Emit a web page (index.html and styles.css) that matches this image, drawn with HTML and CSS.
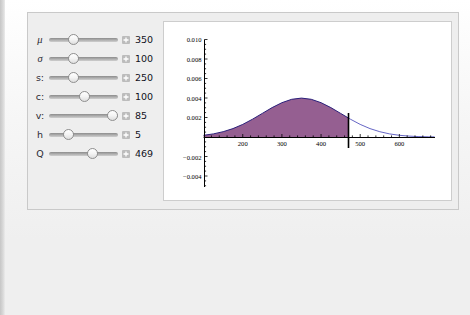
FILE: index.html
```html
<!DOCTYPE html>
<html>
<head>
<meta charset="utf-8">
<link rel="stylesheet" href="styles.css">
</head>
<body>
<div class="window">
  <div class="edge"></div>
  <div class="page">
    <div class="panel">
      <div class="controls">
        <div class="row"><span class="lbl sym">μ</span><div class="slider"><span class="knob" style="left:19px"></span></div><svg class="plus" viewBox="0 0 8 8"><rect width="8" height="8" rx="1" fill="#bcbcbc"/><path d="M4 1.5v5M1.5 4h5" stroke="#fff" stroke-width="1.3"/></svg><span class="val">350</span></div>
        <div class="row"><span class="lbl sym">σ</span><div class="slider"><span class="knob" style="left:19px"></span></div><svg class="plus" viewBox="0 0 8 8"><rect width="8" height="8" rx="1" fill="#bcbcbc"/><path d="M4 1.5v5M1.5 4h5" stroke="#fff" stroke-width="1.3"/></svg><span class="val">100</span></div>
        <div class="row"><span class="lbl">s:</span><div class="slider"><span class="knob" style="left:19px"></span></div><svg class="plus" viewBox="0 0 8 8"><rect width="8" height="8" rx="1" fill="#bcbcbc"/><path d="M4 1.5v5M1.5 4h5" stroke="#fff" stroke-width="1.3"/></svg><span class="val">250</span></div>
        <div class="row"><span class="lbl">c:</span><div class="slider"><span class="knob" style="left:30px"></span></div><svg class="plus" viewBox="0 0 8 8"><rect width="8" height="8" rx="1" fill="#bcbcbc"/><path d="M4 1.5v5M1.5 4h5" stroke="#fff" stroke-width="1.3"/></svg><span class="val">100</span></div>
        <div class="row"><span class="lbl">v:</span><div class="slider"><span class="knob" style="left:58px"></span></div><svg class="plus" viewBox="0 0 8 8"><rect width="8" height="8" rx="1" fill="#bcbcbc"/><path d="M4 1.5v5M1.5 4h5" stroke="#fff" stroke-width="1.3"/></svg><span class="val">85</span></div>
        <div class="row"><span class="lbl">h</span><div class="slider"><span class="knob" style="left:14px"></span></div><svg class="plus" viewBox="0 0 8 8"><rect width="8" height="8" rx="1" fill="#bcbcbc"/><path d="M4 1.5v5M1.5 4h5" stroke="#fff" stroke-width="1.3"/></svg><span class="val">5</span></div>
        <div class="row"><span class="lbl">Q</span><div class="slider"><span class="knob" style="left:38px"></span></div><svg class="plus" viewBox="0 0 8 8"><rect width="8" height="8" rx="1" fill="#bcbcbc"/><path d="M4 1.5v5M1.5 4h5" stroke="#fff" stroke-width="1.3"/></svg><span class="val">469</span></div>
      </div>
      <div class="plot">
        <svg class="chart" width="287" height="178" viewBox="164 22 287 178">
          <polygon fill="#955f91" points="203.6,137 203.6,135.3 213.39,133.9 223.18,131.7 232.96,128.6 242.75,124.4 252.54,119.2 262.33,113.4 272.11,107.6 281.9,102.7 291.69,99.3 301.48,98.1 311.26,99.3 321.05,102.7 330.84,107.6 340.63,113.4 348.07,117.8 348.07,137"/>
          <polyline fill="none" stroke="#2a1f7a" stroke-width="1" points="203.6,135.3 213.39,133.9 223.18,131.7 232.96,128.6 242.75,124.4 252.54,119.2 262.33,113.4 272.11,107.6 281.9,102.7 291.69,99.3 301.48,98.1 311.26,99.3 321.05,102.7 330.84,107.6 340.63,113.4 348.07,117.8"/>
          <polyline fill="none" stroke="#3d3db5" stroke-width="0.8" points="348.07,117.8 350.41,119.2 360.2,124.4 369.99,128.6 379.78,131.7 389.56,133.9 399.35,135.3 409.14,136.1 418.93,136.6 428.71,136.8 434.6,136.9"/>
          <path stroke="#000" stroke-width="1" fill="none" d="M203.6 137.5H435M204.5 39.5V187"/>
          <path stroke="#000" stroke-width="0.8" fill="none" d="M204.5 39.5h3M204.5 59h3M204.5 78.5h3M204.5 98h3M204.5 117.5h3M204.5 156.5h3M204.5 176h3
            M204.5 44.4h1.6M204.5 49.25h1.6M204.5 54.1h1.6M204.5 63.9h1.6M204.5 68.75h1.6M204.5 73.6h1.6M204.5 83.4h1.6M204.5 88.25h1.6M204.5 93.1h1.6M204.5 102.9h1.6M204.5 107.75h1.6M204.5 112.6h1.6M204.5 122.4h1.6M204.5 127.25h1.6M204.5 132.1h1.6M204.5 141.9h1.6M204.5 146.75h1.6M204.5 151.6h1.6M204.5 161.4h1.6M204.5 166.25h1.6M204.5 171.1h1.6M204.5 180.9h1.6M204.5 185.75h1.6
            M242.75 137v-3M281.9 137v-3M321.05 137v-3M360.2 137v-3M399.35 137v-3
            M211.43 137v-1.6M219.26 137v-1.6M227.09 137v-1.6M234.92 137v-1.6M250.58 137v-1.6M258.41 137v-1.6M266.24 137v-1.6M274.07 137v-1.6M289.73 137v-1.6M297.56 137v-1.6M305.39 137v-1.6M313.22 137v-1.6M328.88 137v-1.6M336.71 137v-1.6M344.54 137v-1.6M352.37 137v-1.6M368.03 137v-1.6M375.86 137v-1.6M383.69 137v-1.6M391.52 137v-1.6M407.18 137v-1.6M415.01 137v-1.6M422.84 137v-1.6M430.67 137v-1.6"/>
          <path stroke="#000" stroke-width="1.6" d="M348.5 113V148"/>
          <g class="tick-y" text-anchor="end">
            <text x="201.5" y="42">0.010</text>
            <text x="201.5" y="61.5">0.008</text>
            <text x="201.5" y="81">0.006</text>
            <text x="201.5" y="100.5">0.004</text>
            <text x="201.5" y="120">0.002</text>
            <text x="201.5" y="159.5">−0.002</text>
            <text x="201.5" y="179">−0.004</text>
          </g>
          <g class="tick-x" text-anchor="middle">
            <text x="242.75" y="145.5">200</text>
            <text x="281.9" y="145.5">300</text>
            <text x="321.05" y="145.5">400</text>
            <text x="360.2" y="145.5">500</text>
            <text x="399.35" y="145.5">600</text>
          </g>
        </svg>
      </div>
    </div>
  </div>
</div>
</body>
</html>
```
FILE: styles.css
```css
html, body {
  margin: 0;
  padding: 0;
}
body {
  width: 470px;
  height: 315px;
  overflow: hidden;
  font-family: "DejaVu Sans", "Liberation Sans", sans-serif;
}
.window {
  display: flex;
  height: 315px;
  background: linear-gradient(#ffffff 0, #f6f6f6 120px, #efefef 240px, #efefef 315px);
}
.edge {
  width: 5px;
  flex: none;
  background: linear-gradient(to right, #c6c6c6, #d9d9d9 60%, #ebebeb);
}
.page {
  padding: 12px 0 0 22px;
}
.panel {
  width: 430px;
  height: 196px;
  border: 1px solid #c9c9c9;
  background: #eeeeee;
  display: flex;
}
.controls {
  width: 135px;
  flex: none;
  padding-top: 17px;
  box-sizing: border-box;
}
.row {
  display: flex;
  align-items: center;
  height: 19px;
}
.lbl {
  width: 16px;
  margin-left: 4px;
  text-align: center;
  font-size: 9.5px;
  color: #2a2a33;
}
.lbl.sym {
  font-family: "Liberation Serif", "DejaVu Serif", serif;
  font-style: italic;
  font-size: 10.5px;
}
.slider {
  position: relative;
  width: 69px;
  height: 4px;
  margin-left: 1px;
  border-radius: 2px;
  background: linear-gradient(#8c8c8c, #b5b5b5 60%, #cfcfcf);
}
.knob {
  position: absolute;
  top: -4px;
  width: 11px;
  height: 11px;
  box-sizing: border-box;
  border-radius: 50%;
  border: 1px solid #8f8f8f;
  background: linear-gradient(#ffffff, #f4f4f4 50%, #dedede);
}
.plus {
  width: 8px;
  height: 8px;
  margin-left: 4px;
  flex: none;
}
.val {
  margin-left: 5px;
  font-size: 9.5px;
  color: #111122;
}
.plot {
  margin-top: 8px;
  width: 287px;
  height: 178px;
  border: 1px solid #cdcdcd;
  background: #ffffff;
}
.chart {
  display: block;
}
.chart text {
  font-family: "Liberation Serif", serif;
  font-size: 6.6px;
  fill: #000;
}
```
